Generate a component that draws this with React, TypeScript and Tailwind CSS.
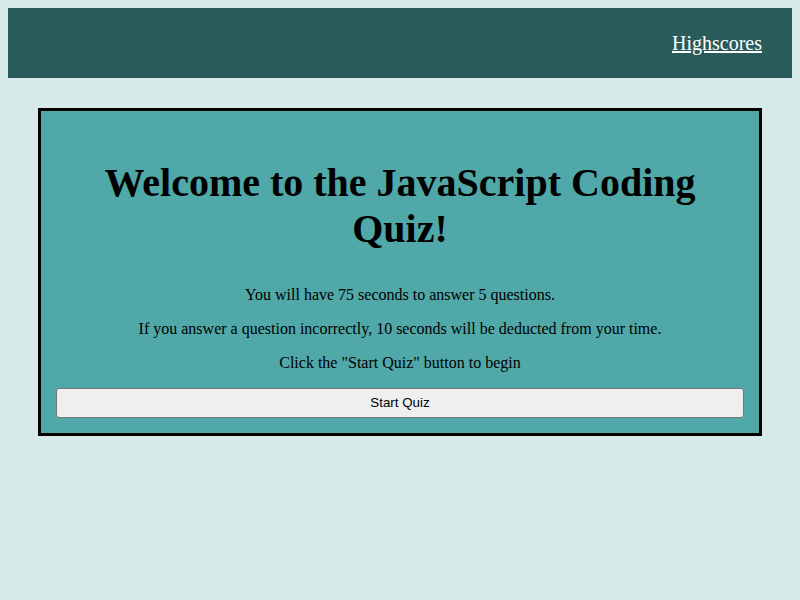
const App = () => {
	return (
		<div className="min-h-screen bg-[#d7e9e9] p-2 font-['Liberation_Serif',serif] text-black">
			<header className="flex h-[70px] items-center justify-end bg-[#2a5b5b] px-[30px]">
				<a href="#" className="text-[20px] leading-[23px] text-white underline">
					Highscores
				</a>
			</header>

			<main className="mx-[30px] mt-[30px] border-[3px] border-black bg-[#50a8a8] px-[15px] pb-[15px]">
				<div className="flex flex-col text-center">
					<h1 className="mx-auto mt-[48.5px] max-w-[620px] text-[40px] font-bold leading-[46px]">
						Welcome to the JavaScript Coding Quiz!
					</h1>
					<p className="mt-[34px] text-[16px] leading-[18px]">
						You will have 75 seconds to answer 5 questions.
					</p>
					<p className="mt-4 text-[16px] leading-[18px]">
						If you answer a question incorrectly, 10 seconds will be deducted from your time.
					</p>
					<p className="mt-4 text-[16px] leading-[18px]">
						Click the "Start Quiz" button to begin
					</p>
					<button
						type="button"
						className="mt-4 h-[30px] w-full rounded-[3px] border border-[#767676] bg-[#efefef] font-['Liberation_Sans',Arial,sans-serif] text-[13.33px] text-black"
					>
						Start Quiz
					</button>
				</div>
			</main>
		</div>
	);
};

export default App;
